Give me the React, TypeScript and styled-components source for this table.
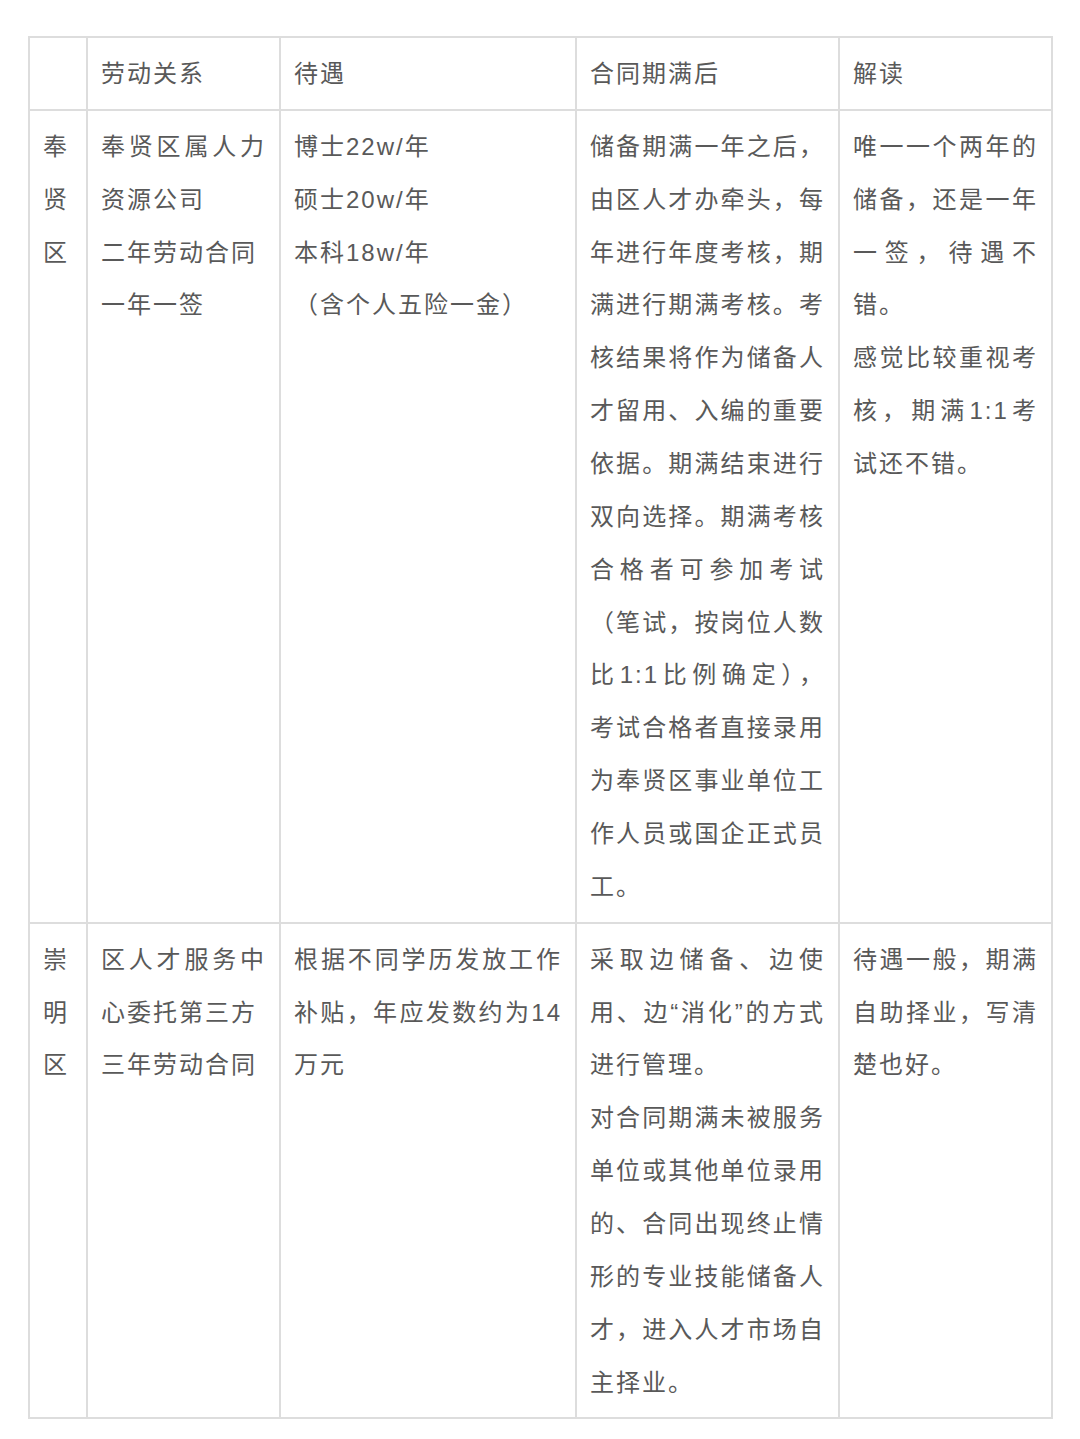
import { createGlobalStyle, styled } from 'styled-components';

const GlobalStyle = createGlobalStyle`
  html, body {
    margin: 0;
    padding: 0;
    background: #ffffff;
  }
  body {
    font-family: "Liberation Sans", "Noto Sans CJK SC", sans-serif;
    color: #595959;
  }
`;

const Page = styled.div`
  padding: 36px 0 0 28px;
  min-height: 1439px;
  box-sizing: border-box;
`;

const Table = styled.table`
  border-collapse: collapse;
  table-layout: fixed;
  width: 1023px;
  font-size: 24px;
  letter-spacing: 2px;
  line-height: 52.86px;
`;

type ColProps = {
  $width: number;
};

const Col = styled.col<ColProps>`
  width: ${({ $width }) => $width}px;
`;

const Cell = styled.td`
  border: 2px solid #dddddd;
  padding: 10px 13px 8px 13px;
  vertical-align: top;
  text-align: justify;
  word-break: break-all;
`;

const HeadCell = styled(Cell).attrs({ as: 'th' })`
  font-weight: normal;
  text-align: left;
`;

const Line = styled.div`
  text-align: justify;
`;

type Row = {
  district: string;
  relation: string[];
  pay: string[];
  after: string[];
  note: string[];
};

const rows: Row[] = [
  {
    district: '奉贤区',
    relation: ['奉贤区属人力资源公司', '二年劳动合同', '一年一签'],
    pay: ['博士22w/年', '硕士20w/年', '本科18w/年', '（含个人五险一金）'],
    after: [
      '储备期满一年之后，由区人才办牵头，每年进行年度考核，期满进行期满考核。考核结果将作为储备人才留用、入编的重要依据。期满结束进行双向选择。期满考核合格者可参加考试（笔试，按岗位人数比1:1比例确定），考试合格者直接录用为奉贤区事业单位工作人员或国企正式员工。',
    ],
    note: ['唯一一个两年的储备，还是一年一签，待遇不错。', '感觉比较重视考核，期满1:1考试还不错。'],
  },
  {
    district: '崇明区',
    relation: ['区人才服务中心委托第三方', '三年劳动合同'],
    pay: ['根据不同学历发放工作补贴，年应发数约为14万元'],
    after: [
      '采取边储备、边使用、边“消化”的方式进行管理。',
      '对合同期满未被服务单位或其他单位录用的、合同出现终止情形的专业技能储备人才，进入人才市场自主择业。',
    ],
    note: ['待遇一般，期满自助择业，写清楚也好。'],
  },
];

const renderLines = (lines: string[]) => lines.map((text) => <Line key={text}>{text}</Line>);

export default function App() {
  return (
    <Page>
      <GlobalStyle />
      <Table>
        <colgroup>
          <Col $width={58} />
          <Col $width={193} />
          <Col $width={296} />
          <Col $width={263} />
          <Col $width={213} />
        </colgroup>
        <thead>
          <tr>
            <HeadCell />
            <HeadCell>劳动关系</HeadCell>
            <HeadCell>待遇</HeadCell>
            <HeadCell>合同期满后</HeadCell>
            <HeadCell>解读</HeadCell>
          </tr>
        </thead>
        <tbody>
          {rows.map((row) => (
            <tr key={row.district}>
              <Cell>{row.district}</Cell>
              <Cell>{renderLines(row.relation)}</Cell>
              <Cell>{renderLines(row.pay)}</Cell>
              <Cell>{renderLines(row.after)}</Cell>
              <Cell>{renderLines(row.note)}</Cell>
            </tr>
          ))}
        </tbody>
      </Table>
    </Page>
  );
}
